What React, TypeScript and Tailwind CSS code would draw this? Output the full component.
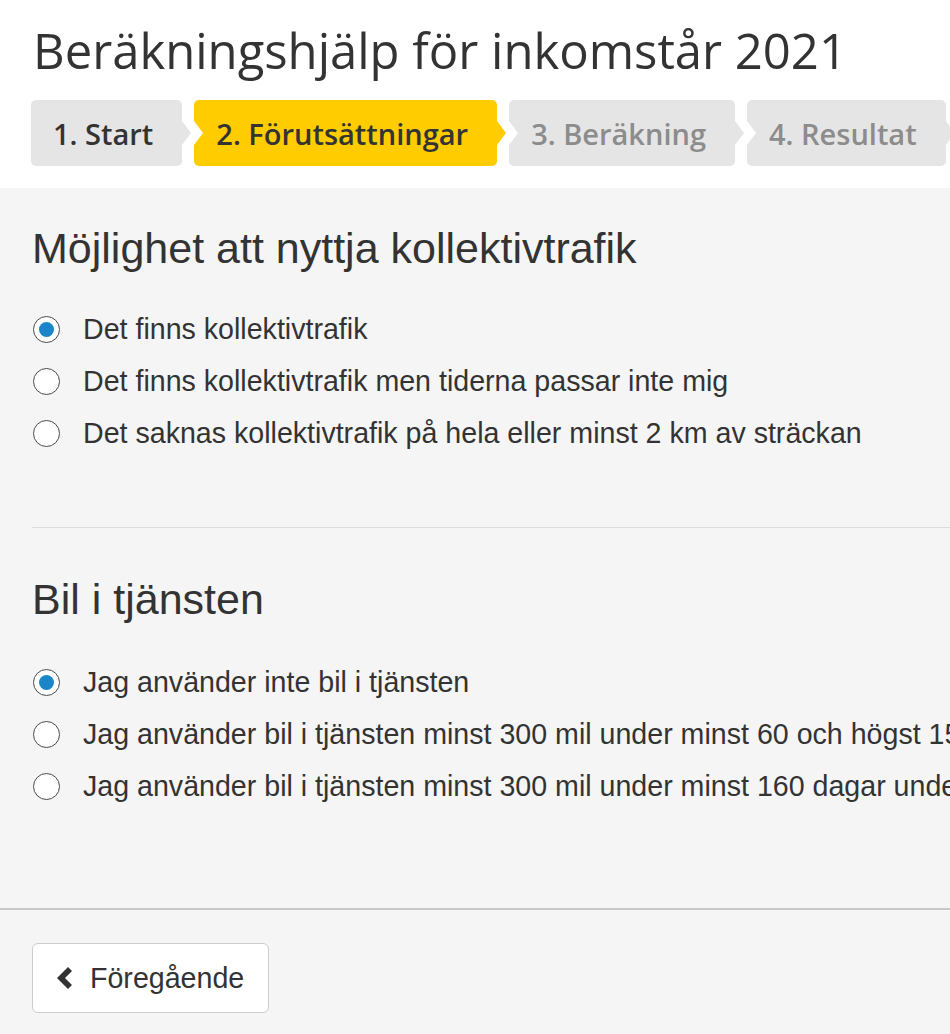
import React from "react";

const steps = [
  { label: "1. Start", state: "done" },
  { label: "2. Förutsättningar", state: "active" },
  { label: "3. Beräkning", state: "todo" },
  { label: "4. Resultat", state: "todo" },
];

function Step({ label, state, first }: { label: string; state: string; first: boolean }) {
  const bg = state === "active" ? "bg-[#ffcc00]" : "bg-[#e5e5e5]";
  const arrow = state === "active" ? "border-l-[#ffcc00]" : "border-l-[#e5e5e5]";
  const text = state === "todo" ? "text-[#8c8c8c]" : "text-[#333333]";
  return (
    <div className={`relative flex h-[66px] items-center rounded-[5px] pl-[22px] pr-[29px] ${bg}`}>
      {!first && (
        <span className="absolute left-0 top-1/2 -translate-y-1/2 h-0 w-0 border-y-[12px] border-y-transparent border-l-[9px] border-l-white" />
      )}
      <span className={`text-[29px] font-semibold leading-none ${text}`}>{label}</span>
      <span className={`absolute right-[-9px] top-1/2 -translate-y-1/2 h-0 w-0 border-y-[12px] border-y-transparent border-l-[9px] ${arrow}`} />
    </div>
  );
}

function Radio({ label, checked }: { label: string; checked?: boolean }) {
  return (
    <div className="flex h-[52px] items-center gap-[23px]">
      <span className="flex h-[27px] w-[27px] shrink-0 items-center justify-center rounded-full border-[1.5px] border-[#4a4a4a] bg-white">
        {checked && <span className="h-[15px] w-[15px] rounded-full bg-[#1a85c8]" />}
      </span>
      <span className="text-[28.6px] leading-[52px] text-[#333333]">{label}</span>
    </div>
  );
}

export default function App() {
  return (
    <div className="w-[950px] min-h-[1034px] overflow-hidden bg-[#f5f5f5] whitespace-nowrap" style={{ fontFamily: '"Liberation Sans", Arial, sans-serif' }}>
      <header className="bg-white pl-[31px] pt-[20px] pb-[22px]" style={{ fontFamily: '"Open Sans", sans-serif' }}>
        <h1 className="pl-[2px] text-[49px] leading-[60px] text-[#333333]">Beräkningshjälp för inkomstår 2021</h1>
        <div className="mt-[20px] flex gap-[12px]">
          {steps.map((s, i) => (
            <Step key={s.label} label={s.label} state={s.state} first={i === 0} />
          ))}
        </div>
      </header>
      <main className="pt-[35px]">
        <section className="pl-[32px]">
          <h2 className="text-[43px] leading-[50px] text-[#333333]">Möjlighet att nyttja kollektivtrafik</h2>
          <div className="mt-[30px] pl-[1px]">
            <Radio label="Det finns kollektivtrafik" checked />
            <Radio label="Det finns kollektivtrafik men tiderna passar inte mig" />
            <Radio label="Det saknas kollektivtrafik på hela eller minst 2 km av sträckan" />
          </div>
          <div className="mt-[68px] h-px bg-[#dddddd]" />
          <h2 className="mt-[46px] text-[43px] leading-[50px] text-[#333333]">Bil i tjänsten</h2>
          <div className="mt-[32px] pl-[1px]">
            <Radio label="Jag använder inte bil i tjänsten" checked />
            <Radio label="Jag använder bil i tjänsten minst 300 mil under minst 60 och högst 159 dagar under året" />
            <Radio label="Jag använder bil i tjänsten minst 300 mil under minst 160 dagar under året" />
          </div>
        </section>
        <div className="mt-[96px] h-[2px] bg-[#c8c8c8]" />
        <div className="pl-[32px] pt-[33px]">
          <button className="flex h-[70px] w-[237px] items-center gap-[17px] rounded-[6px] border border-[#cccccc] bg-white pl-[24px] text-[28.6px] text-[#333333]">
            <svg width="16" height="22" viewBox="0 0 16 22" className="shrink-0">
              <polygon points="11,0 15,4 8,11 15,18 11,22 0,11" fill="#333333" />
            </svg>
            <span>Föregående</span>
          </button>
        </div>
      </main>
    </div>
  );
}
